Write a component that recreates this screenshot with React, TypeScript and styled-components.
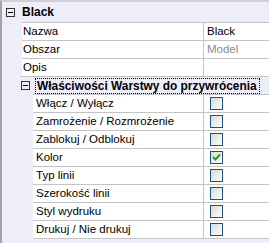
import styled, { createGlobalStyle } from "styled-components";

const GlobalStyle = createGlobalStyle`
  html, body {
    margin: 0;
    padding: 0;
    background: #eeeefa;
  }
`;

const Panel = styled.div`
  width: 269px;
  height: 243px;
  box-sizing: border-box;
  border-top: 2px solid #d0d0d0;
  border-left: 2px solid #a4a4a4;
  background: #eeeefa;
  font-family: "Liberation Sans", Arial, sans-serif;
  font-size: 11.5px;
  color: #000;
  overflow: hidden;
`;

const CategoryHeader = styled.div<{ $top?: boolean }>`
  display: flex;
  align-items: center;
  height: ${(p) => (p.$top ? "20px" : "17px")};
  padding-left: ${(p) => (p.$top ? "4px" : "0")};
  margin-left: ${(p) => (p.$top ? "0" : "-1px")};
  border-top: ${(p) => (p.$top ? "none" : "1px solid #c4c4c4")};
  background: #eeeefa;
`;

const Expander = styled.span<{ $gap: number }>`
  position: relative;
  width: 9px;
  height: 9px;
  box-sizing: border-box;
  border: 1px solid #333;
  margin-right: ${(p) => p.$gap}px;
  flex: none;

  &::after {
    content: "";
    position: absolute;
    left: 1px;
    right: 1px;
    top: 3px;
    height: 1px;
    background: #000;
  }
`;

const Title = styled.span`
  font-weight: bold;
  font-size: 12px;
  line-height: 16px;
`;

const FocusTitle = styled(Title)`
  border: 1px dotted #000;
  padding: 0 2px 0 1px;
  font-size: 11.9px;
  line-height: 14px;
  white-space: nowrap;
`;

const Body = styled.div<{ $indent: number }>`
  padding-left: ${(p) => p.$indent}px;
`;

const Row = styled.div<{ $last?: boolean }>`
  display: grid;
  grid-template-columns: 1fr 65px;
  height: 17px;
  border-top: 1px solid #c4c4c4;
  border-bottom: ${(p) => (p.$last ? "1px solid #c4c4c4" : "none")};
  background: #fff;
`;

const Label = styled.div<{ $pad: number }>`
  padding-left: ${(p) => p.$pad}px;
  border-right: 1px solid #c4c4c4;
  line-height: 17px;
  white-space: nowrap;
  overflow: hidden;
`;

const Value = styled.div<{ $muted?: boolean }>`
  padding-left: 3px;
  line-height: 17px;
  color: ${(p) => (p.$muted ? "#8d8d8d" : "#000")};
  display: flex;
  align-items: center;
`;

const CheckBox = styled.span`
  width: 13px;
  height: 13px;
  box-sizing: border-box;
  margin-left: 3px;
  border: 1px solid #1c5180;
  background: linear-gradient(135deg, #dcdcd5 0%, #f2f2ef 70%, #ffffff 100%);
  display: flex;
  align-items: center;
  justify-content: center;
`;

const layers: [string, boolean][] = [
  ["Włącz / Wyłącz", false],
  ["Zamrożenie / Rozmrożenie", false],
  ["Zablokuj / Odblokuj", false],
  ["Kolor", true],
  ["Typ linii", false],
  ["Szerokość linii", false],
  ["Styl wydruku", false],
  ["Drukuj / Nie drukuj", false],
];

export default function App() {
  return (
    <>
      <GlobalStyle />
      <Panel>
        <CategoryHeader $top>
          <Expander $gap={7} />
          <Title>Black</Title>
        </CategoryHeader>
        <Body $indent={20}>
          <Row>
            <Label $pad={1}>Nazwa</Label>
            <Value>Black</Value>
          </Row>
          <Row>
            <Label $pad={1}>Obszar</Label>
            <Value $muted>Model</Value>
          </Row>
          <Row>
            <Label $pad={1}>Opis</Label>
            <Value />
          </Row>
          <CategoryHeader>
            <Expander $gap={5} />
            <FocusTitle>Właściwości Warstwy do przywrócenia</FocusTitle>
          </CategoryHeader>
          <Body $indent={11}>
            {layers.map(([name, checked], i) => (
              <Row key={name} $last={i === layers.length - 1}>
                <Label $pad={3}>{name}</Label>
                <Value>
                  <CheckBox>
                    {checked && (
                      <svg width="9" height="9" viewBox="0 0 9 9">
                        <path d="M1 4 L3.5 6.5 L8 1.5" fill="none" stroke="#21a121" strokeWidth="2" />
                      </svg>
                    )}
                  </CheckBox>
                </Value>
              </Row>
            ))}
          </Body>
        </Body>
      </Panel>
    </>
  );
}
